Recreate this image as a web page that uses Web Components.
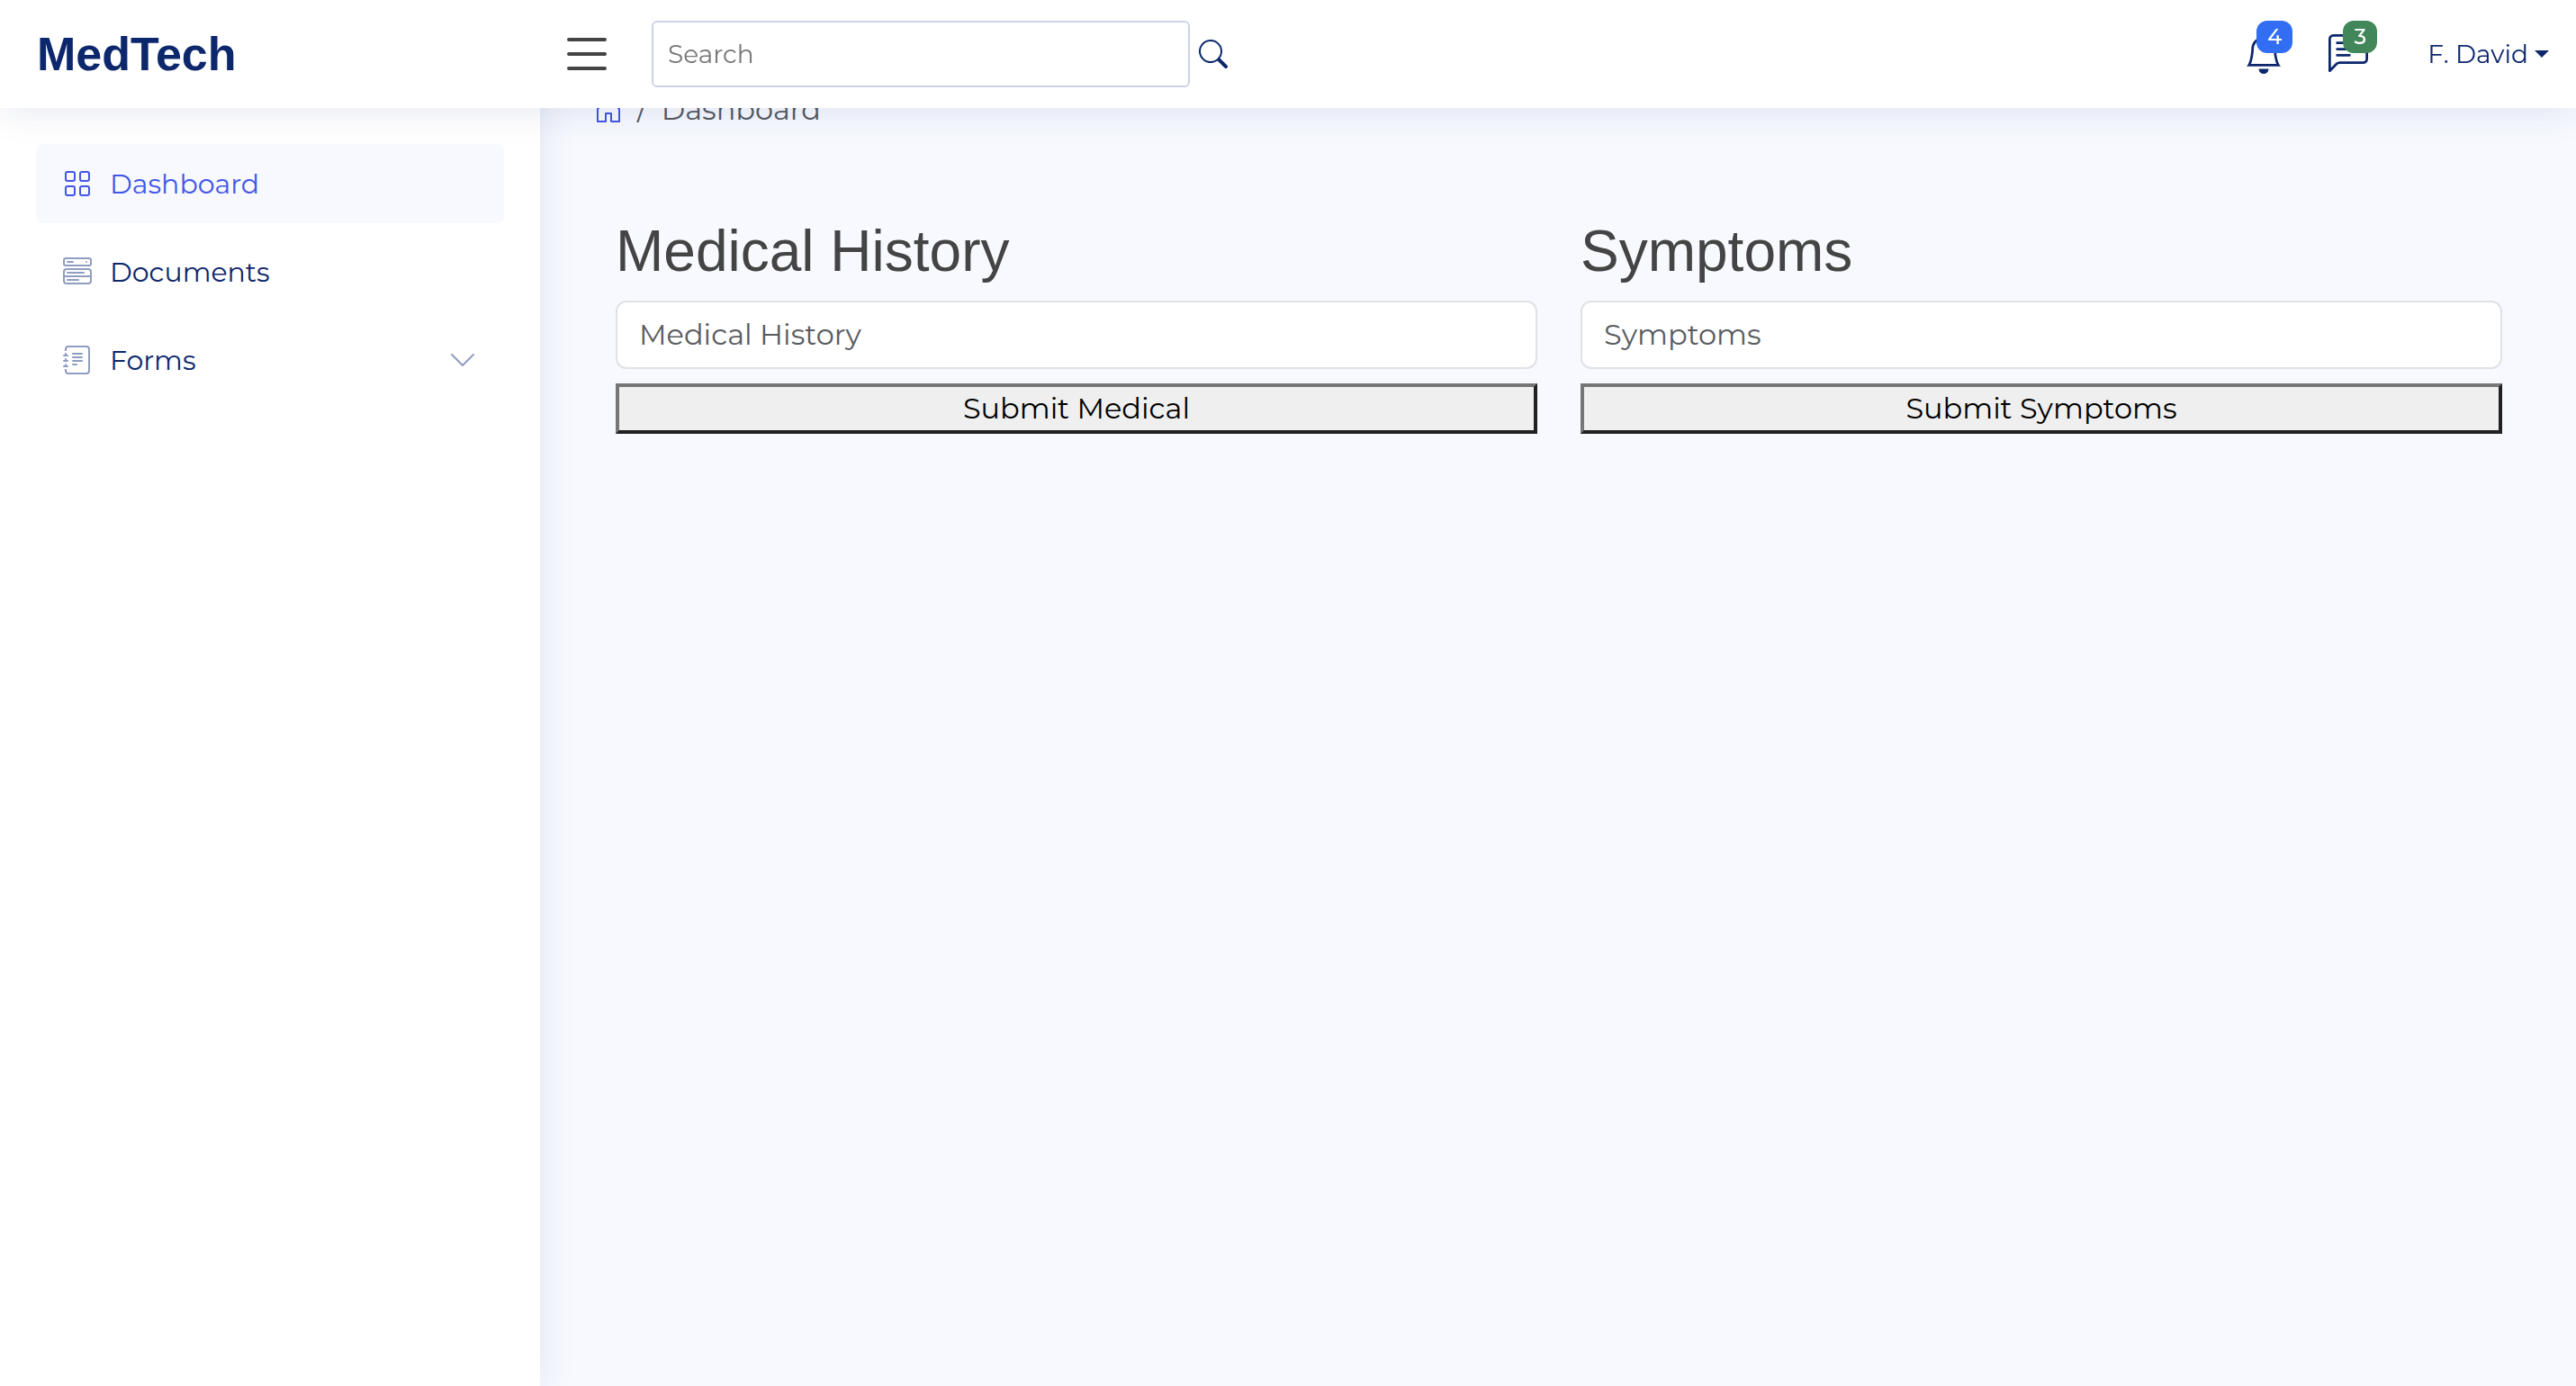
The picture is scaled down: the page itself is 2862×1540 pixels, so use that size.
<!DOCTYPE html>
<html lang="en">
<head>
<meta charset="utf-8">
<title>MedTech - Dashboard</title>
<style>
html { height: 100%; }
body {
  --ink: #0c276c; --brand: #4355e8; --muted: #8f9dc0; --text: #444444; --page: #f7f9ff;
  margin: 0; min-height: 100%; background: var(--page); color: var(--text);
  font-family: "Montserrat", Inter, "Open Sans", sans-serif; font-size: 32px; line-height: 48px;
}
</style>
</head>
<body>
<med-app></med-app>
<script>
const define = (name, html) => {
  const t = document.createElement('template');
  t.innerHTML = '<style>*{box-sizing:border-box}a{color:inherit;text-decoration:none}</style>' + html;
  customElements.define(name, class extends HTMLElement {
    constructor() {
      super();
      this.attachShadow({ mode: 'open' }).append(t.content.cloneNode(true));
    }
    connectedCallback() {
      this.shadowRoot.querySelectorAll('[data-from]').forEach(el => {
        const v = this.getAttribute(el.dataset.from);
        if (v === null) return;
        if (el.tagName === 'INPUT') el.placeholder = v; else el.textContent = v;
      });
    }
  });
};

const ICONS = {
  list: '<path fill-rule="evenodd" d="M2.5 12a.5.5 0 0 1 .5-.5h10a.5.5 0 0 1 0 1H3a.5.5 0 0 1-.5-.5m0-4a.5.5 0 0 1 .5-.5h10a.5.5 0 0 1 0 1H3a.5.5 0 0 1-.5-.5m0-4a.5.5 0 0 1 .5-.5h10a.5.5 0 0 1 0 1H3a.5.5 0 0 1-.5-.5"/>',
  search: '<path d="M11.742 10.344a6.5 6.5 0 1 0-1.397 1.398h-.001q.044.06.098.115l3.85 3.85a1 1 0 0 0 1.415-1.414l-3.85-3.85a1 1 0 0 0-.115-.1zM12 6.5a5.5 5.5 0 1 1-11 0 5.5 5.5 0 0 1 11 0"/>',
  bell: '<path d="M8 16a2 2 0 0 0 2-2H6a2 2 0 0 0 2 2M8 1.918l-.797.161A4 4 0 0 0 4 6c0 .628-.134 2.197-.459 3.742-.16.767-.376 1.566-.663 2.258h10.244c-.287-.692-.502-1.49-.663-2.258C12.134 8.197 12 6.628 12 6a4 4 0 0 0-3.203-3.92zM14.22 12c.223.447.481.801.78 1H1c.299-.199.557-.553.78-1C2.68 10.2 3 6.88 3 6c0-2.42 1.72-4.44 4.005-4.901a1 1 0 1 1 1.99 0A5 5 0 0 1 13 6c0 .88.32 4.2 1.22 6"/>',
  chat: '<path d="M14 1a1 1 0 0 1 1 1v8a1 1 0 0 1-1 1H4.414A2 2 0 0 0 3 11.586l-2 2V2a1 1 0 0 1 1-1zM2 0a2 2 0 0 0-2 2v12.793a.5.5 0 0 0 .854.353l2.853-2.853A1 1 0 0 1 4.414 12H14a2 2 0 0 0 2-2V2a2 2 0 0 0-2-2z"/><path d="M3 3.5a.5.5 0 0 1 .5-.5h9a.5.5 0 0 1 0 1h-9a.5.5 0 0 1-.5-.5M3 6a.5.5 0 0 1 .5-.5h9a.5.5 0 0 1 0 1h-9A.5.5 0 0 1 3 6m0 2.500a.5.5 0 0 1 .5-.5h5a.5.5 0 0 1 0 1h-5a.5.5 0 0 1-.5-.5"/>',
  grid: '<g fill="none" stroke="currentColor"><rect x="1.500" y="1.500" width="5" height="5" rx="1"/><rect x="9.500" y="1.500" width="5" height="5" rx="1"/><rect x="1.500" y="9.500" width="5" height="5" rx="1"/><rect x="9.500" y="9.500" width="5" height="5" rx="1"/></g>',
  menu: '<g fill="none" stroke="currentColor"><rect x=".5" y=".5" width="15" height="4" rx="1"/><rect x=".5" y="6.500" width="15" height="8" rx="1.500"/><path d="M.5 10.500h15"/><path stroke-linecap="round" d="M2.500 2.500h3M2.500 8.500h9M2.500 12.500h6"/></g><circle cx="13" cy="2.500" r=".5"/>',
  journal: '<path d="M5 10.500a.5.5 0 0 1 .5-.5h2a.5.5 0 0 1 0 1h-2a.5.5 0 0 1-.5-.5m0-2a.5.5 0 0 1 .5-.5h5a.5.5 0 0 1 0 1h-5a.5.5 0 0 1-.5-.5m0-2a.5.5 0 0 1 .5-.5h5a.5.5 0 0 1 0 1h-5a.5.5 0 0 1-.5-.5m0-2a.5.5 0 0 1 .5-.5h5a.5.5 0 0 1 0 1h-5a.5.5 0 0 1-.5-.5"/><path d="M3 0h10a2 2 0 0 1 2 2v12a2 2 0 0 1-2 2H3a2 2 0 0 1-2-2v-1h1v1a1 1 0 0 0 1 1h10a1 1 0 0 0 1-1V2a1 1 0 0 0-1-1H3a1 1 0 0 0-1 1v1H1V2a2 2 0 0 1 2-2"/><path d="M1 5v-.5a.5.5 0 0 1 1 0V5h.5a.5.5 0 0 1 0 1h-2a.5.5 0 0 1 0-1zm0 3v-.5a.5.5 0 0 1 1 0V8h.5a.5.5 0 0 1 0 1h-2a.5.5 0 0 1 0-1zm0 3v-.5a.5.5 0 0 1 1 0v.5h.5a.5.5 0 0 1 0 1h-2a.5.5 0 0 1 0-1z"/>',
  chevron: '<path d="M1.646 4.646a.5.5 0 0 1 .708 0L8 10.293l5.646-5.647a.5.5 0 0 1 .708.708l-6 6a.5.5 0 0 1-.708 0l-6-6a.5.5 0 0 1 0-.708"/>',
  house: '<path fill="none" stroke="currentColor" stroke-linejoin="round" d="M2 7.500l6-6 6 6v7H9.500V10h-3v4.500H2z"/>'
};
customElements.define('med-icon', class extends HTMLElement {
  connectedCallback() {
    if (this.shadowRoot) return;
    this.attachShadow({ mode: 'open' }).innerHTML =
      `<style>:host{display:block;flex:none;width:var(--size,32px);height:var(--size,32px)}svg{display:block;width:100%;height:100%}</style>
       <svg viewBox="0 0 16 16" fill="currentColor" aria-hidden="true">${ICONS[this.getAttribute('name')]}</svg>`;
  }
});

define('med-badge-button', `
<style>
:host { display: block; }
button { position: relative; display: block; border: 0; padding: 0; background: none; color: var(--ink); --size: 44px; }
span { position: absolute; right: -10px; top: -15px; min-width: 36px; padding: 0 12px; border-radius: 12px;
  background: var(--badge); color: #fff; font: 500 24px/36px "Montserrat", Inter, sans-serif; }
</style>
<button type="button"><slot></slot><span data-from="count"></span></button>`);

define('med-header', `
<style>
:host { display: flex; align-items: center; position: fixed; inset: 0 0 auto 0; z-index: 10; height: 120px;
  padding: 0 30px 0 41px; background: #fff; box-shadow: 0 4px 40px rgba(1, 41, 112, .1); color: var(--ink); }
.logo { flex: none; width: 579px; font: 700 52px/60px "Liberation Sans", Arial, sans-serif; }
button { border: 0; padding: 0; background: none; color: inherit; font: inherit; display: block; }
.toggle { color: var(--text); --size: 64px; }
form { display: flex; align-items: center; gap: 10px; margin-left: 40px; }
input { width: 598px; height: 74px; padding: 0 16px; border: 2px solid #ccd3e5; border-radius: 6px; background: #fff;
  color: var(--ink); font: 28px/36px "Montserrat", Inter, sans-serif; }
input::placeholder { color: #777; opacity: 1; }
nav { display: flex; align-items: center; margin-left: auto; font-size: 28px; }
.bell { margin-right: 50px; }
.chat { margin-right: 66px; }
.user { display: flex; align-items: center; gap: 7px; }
.user::after { content: ""; border: 8px solid transparent; border-top-color: currentColor; border-bottom: 0; }
</style>
<a class="logo" href="#">MedTech</a>
<button class="toggle" type="button" aria-label="Toggle sidebar"><med-icon name="list"></med-icon></button>
<form role="search"><input type="text" placeholder="Search" aria-label="Search">
<button type="button" aria-label="Submit search"><med-icon name="search"></med-icon></button></form>
<nav>
<med-badge-button class="bell" count="4" style="--badge:#316ef4"><med-icon name="bell"></med-icon></med-badge-button>
<med-badge-button class="chat" count="3" style="--badge:#418759"><med-icon name="chat"></med-icon></med-badge-button>
<a class="user" href="#">F. David</a>
</nav>`);

define('med-nav-item', `
<style>
:host { display: block; }
a { display: flex; align-items: center; height: 88px; padding: 0 30px; border-radius: 8px; color: var(--ink); font-size: 30px; }
span { flex: 1; margin-left: 20px; padding-top: 2px; }
::slotted(med-icon) { color: var(--muted); }
:host([active]) a { background: var(--page); color: var(--brand); }
:host([active]) ::slotted(med-icon) { color: var(--brand); }
</style>
<a href="#"><slot name="icon"></slot><span data-from="label"></span><slot name="end"></slot></a>`);

define('med-sidebar', `
<style>
:host { display: flex; flex-direction: column; gap: 10px; flex: none; width: 600px; padding: 160px 40px 40px; background: #fff;
  box-shadow: 0 0 40px rgba(1, 41, 112, .1); }
</style>
<med-nav-item label="Dashboard" active><med-icon slot="icon" name="grid"></med-icon></med-nav-item>
<med-nav-item label="Documents"><med-icon slot="icon" name="menu"></med-icon></med-nav-item>
<med-nav-item label="Forms"><med-icon slot="icon" name="journal"></med-icon><med-icon slot="end" name="chevron"></med-icon></med-nav-item>`);

define('med-breadcrumb', `
<style>
:host { display: flex; align-items: center; gap: 16px; color: #55595f; }
a { color: var(--brand); }
</style>
<a href="#" aria-label="Home"><med-icon name="house"></med-icon></a><span>/</span><span data-from="page"></span>`);

define('med-entry-form', `
<style>
:host { display: block; flex: 1 1 0; min-width: 0; }
form { display: flex; flex-direction: column; gap: 16px; }
h2 { margin: 0; font: 400 64px/77px "Liberation Sans", Arial, sans-serif; color: var(--text); }
input { width: 100%; height: 76px; padding: 0 24px 2px; border: 2px solid #dee2e6; border-radius: 12px; background: #fff;
  color: #212529; font: inherit; }
input::placeholder { color: #595c5f; opacity: 1; }
button { height: 56px; padding: 0 12px; border: 4px solid; border-color: #767676 #212121 #212121 #767676; border-radius: 0;
  background: #efefef; color: #000; font: inherit; line-height: 40px; }
</style>
<form><h2><label for="field" data-from="heading"></label></h2><input id="field" type="text" data-from="heading"><button type="button" data-from="action"></button></form>`);

define('med-app', `
<style>
:host { display: flex; min-height: 100vh; }
main { flex: 1; min-width: 0; padding: 98px 58px 40px 60px; }
section { display: flex; gap: 48px; padding: 95px 24px 0; }
</style>
<med-header></med-header>
<med-sidebar></med-sidebar>
<main>
<med-breadcrumb page="Dashboard"></med-breadcrumb>
<section>
<med-entry-form heading="Medical History" action="Submit Medical"></med-entry-form>
<med-entry-form heading="Symptoms" action="Submit Symptoms"></med-entry-form>
</section>
</main>`);
</script>
</body>
</html>
